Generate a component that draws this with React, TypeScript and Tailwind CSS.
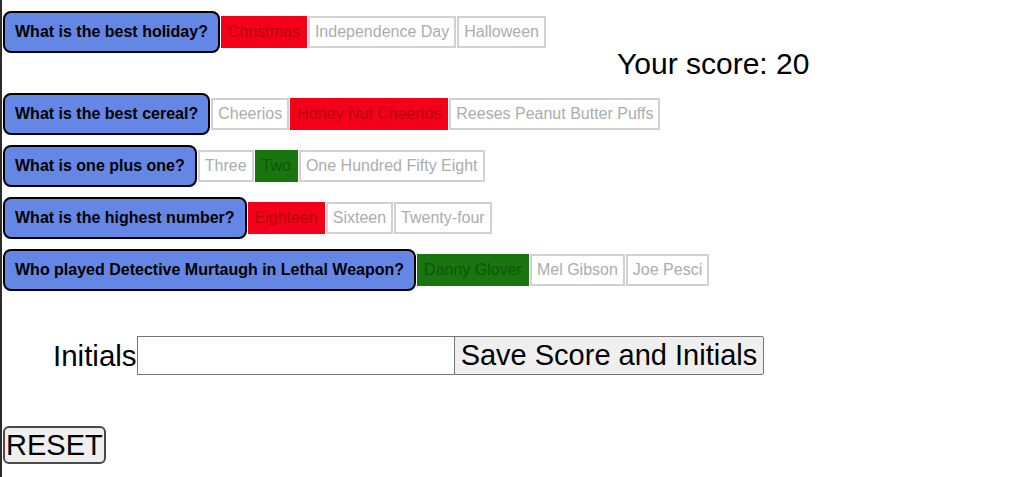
import React from "react";

type Choice = { label: string; state?: "wrong" | "right" };
type Question = { text: string; choices: Choice[] };

const questions: Question[] = [
  {
    text: "What is the best holiday?",
    choices: [{ label: "Christmas", state: "wrong" }, { label: "Independence Day" }, { label: "Halloween" }],
  },
  {
    text: "What is the best cereal?",
    choices: [{ label: "Cheerios" }, { label: "Honey Nut Cheerios", state: "wrong" }, { label: "Reeses Peanut Butter Puffs" }],
  },
  {
    text: "What is one plus one?",
    choices: [{ label: "Three" }, { label: "Two", state: "right" }, { label: "One Hundred Fifty Eight" }],
  },
  {
    text: "What is the highest number?",
    choices: [{ label: "Eighteen", state: "wrong" }, { label: "Sixteen" }, { label: "Twenty-four" }],
  },
  {
    text: "Who played Detective Murtaugh in Lethal Weapon?",
    choices: [{ label: "Danny Glover", state: "right" }, { label: "Mel Gibson" }, { label: "Joe Pesci" }],
  },
];

function ChoiceButton({ choice }: { choice: Choice }) {
  const tone =
    choice.state === "wrong"
      ? "bg-[#f4001a] border-[#f4001a] text-[#b8000f]"
      : choice.state === "right"
        ? "bg-[#18750f] border-[#18750f] text-[#0e560a]"
        : "bg-white border-[#d2d2d2] text-[#acacac]";
  return (
    <button
      disabled
      className={`border-2 px-[5px] py-[5px] text-[16px] leading-[18px] whitespace-nowrap ${tone}`}
    >
      {choice.label}
    </button>
  );
}

function QuestionRow({ q }: { q: Question }) {
  return (
    <div className="flex items-center gap-[1px]">
      <div className="ml-[1px] rounded-lg border-2 border-black bg-[#6487e6] px-[10px] py-[10px] text-[16px] font-bold leading-[18px] text-black whitespace-nowrap">
        {q.text}
      </div>
      {q.choices.map((c) => (
        <ChoiceButton key={c.label} choice={c} />
      ))}
    </div>
  );
}

export default function App() {
  const [first, ...rest] = questions;
  return (
    <div className="min-h-screen border-l-2 border-[#2b2b2b] bg-white pt-[11px] font-['Liberation_Sans',Arial,sans-serif] text-black">
      <QuestionRow q={first} />
      <div className="h-[40px] pl-[615px] text-[30px] leading-[21px]">Your score: 20</div>
      <div className="flex flex-col gap-[10px]">
        {rest.map((q) => (
          <QuestionRow key={q.text} q={q} />
        ))}
      </div>

      <div className="mt-[45px] flex items-center pl-[51px]">
        <label className="text-[29.5px] leading-[33px]">Initials</label>
        <input
          type="text"
          className="h-[39px] w-[318px] border border-[#767676] bg-white px-1 text-[16px] outline-none"
        />
        <button className="-ml-[1px] h-[39px] rounded-[2px] border border-[#767676] bg-[#efefef] px-[6px] text-[29px] leading-[33px]">
          Save Score and Initials
        </button>
      </div>

      <button className="ml-[1px] mt-[51px] h-[38px] rounded-md border-2 border-[#4a4a4a] bg-[#efefef] px-[1px] text-[29px] leading-[33px]">
        RESET
      </button>
    </div>
  );
}
